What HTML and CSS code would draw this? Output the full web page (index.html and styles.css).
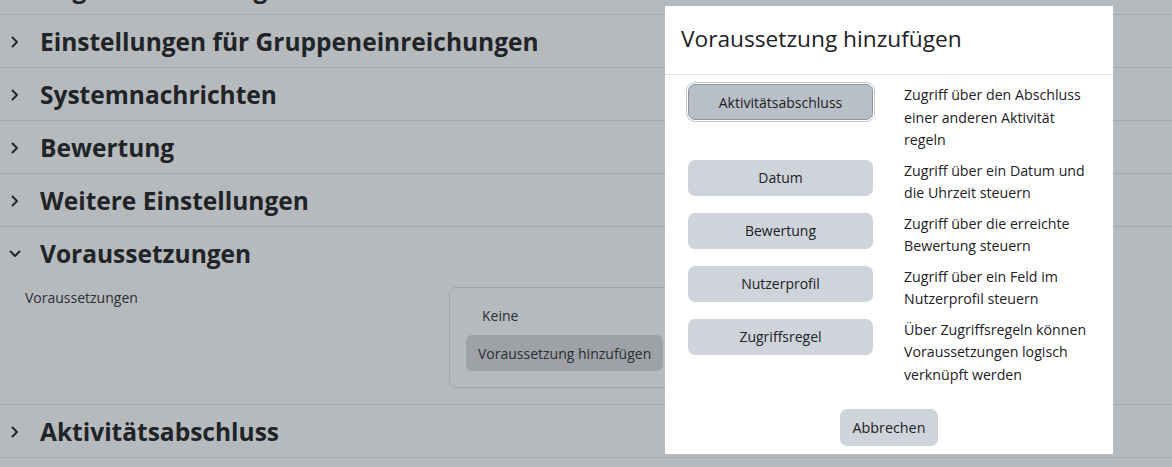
FILE: index.html
```html
<!DOCTYPE html>
<html lang="de">
<head>
<meta charset="utf-8">
<title>Voraussetzung hinzufügen</title>
<link rel="stylesheet" href="styles.css">
</head>
<body>
<div class="page">
  <div class="sections">
    <div class="section">
      <div class="sec-head"><svg class="chev" viewBox="0 0 12 12"><path d="M3.5 1.5 L8 6 L3.5 10.5"/></svg><h3>Abgabeeinstellungen</h3></div>
    </div>
    <div class="section">
      <div class="sec-head"><svg class="chev" viewBox="0 0 12 12"><path d="M3.5 1.5 L8 6 L3.5 10.5"/></svg><h3>Einstellungen für Gruppeneinreichungen</h3></div>
    </div>
    <div class="section">
      <div class="sec-head"><svg class="chev" viewBox="0 0 12 12"><path d="M3.5 1.5 L8 6 L3.5 10.5"/></svg><h3>Systemnachrichten</h3></div>
    </div>
    <div class="section">
      <div class="sec-head"><svg class="chev" viewBox="0 0 12 12"><path d="M3.5 1.5 L8 6 L3.5 10.5"/></svg><h3>Bewertung</h3></div>
    </div>
    <div class="section">
      <div class="sec-head"><svg class="chev" viewBox="0 0 12 12"><path d="M3.5 1.5 L8 6 L3.5 10.5"/></svg><h3>Weitere Einstellungen</h3></div>
    </div>
    <div class="section">
      <div class="sec-head"><svg class="chev" viewBox="0 0 12 12"><path d="M1.5 3.5 L6 8 L10.5 3.5"/></svg><h3>Voraussetzungen</h3></div>
      <div class="sec-body">
        <div class="field-label">Voraussetzungen</div>
        <div class="avail-box">
          <div class="none">Keine</div>
          <button class="btn-page" type="button">Voraussetzung hinzufügen</button>
        </div>
      </div>
    </div>
    <div class="section">
      <div class="sec-head"><svg class="chev" viewBox="0 0 12 12"><path d="M3.5 1.5 L8 6 L3.5 10.5"/></svg><h3>Aktivitätsabschluss</h3></div>
    </div>
  </div>
</div>

<div class="modal">
  <div class="modal-header"><h4>Voraussetzung hinzufügen</h4></div>
  <div class="modal-body">
    <button class="btn focus" type="button">Aktivitätsabschluss</button>
    <div class="desc">Zugriff über den Abschluss<br>einer anderen Aktivität<br>regeln</div>
    <button class="btn" type="button">Datum</button>
    <div class="desc">Zugriff über ein Datum und<br>die Uhrzeit steuern</div>
    <button class="btn" type="button">Bewertung</button>
    <div class="desc">Zugriff über die erreichte<br>Bewertung steuern</div>
    <button class="btn" type="button">Nutzerprofil</button>
    <div class="desc">Zugriff über ein Feld im<br>Nutzerprofil steuern</div>
    <button class="btn" type="button">Zugriffsregel</button>
    <div class="desc">Über Zugriffsregeln können<br>Voraussetzungen logisch<br>verknüpft werden</div>
  </div>
  <div class="modal-footer">
    <button class="btn cancel" type="button">Abbrechen</button>
  </div>
</div>
</body>
</html>
```

FILE: styles.css
```css
* { box-sizing: border-box; }
html, body {
  margin: 0;
  padding: 0;
  width: 1172px;
  height: 467px;
  overflow: hidden;
  background: #b7babd;
  font-family: "Open Sans", "Noto Sans", sans-serif;
  color: #1f2225;
}
.page {
  width: 1172px;
}
.sections {
  margin-top: -38px;
}
.section {
  border-bottom: 1px solid #a5a8ab;
}
.sec-head {
  height: 52px;
  display: flex;
  align-items: center;
  padding-top: 2px;
}
.chev {
  width: 12px;
  height: 12px;
  margin-left: 9px;
  margin-right: 19px;
  fill: none;
  stroke: #25282b;
  stroke-width: 2;
  stroke-linecap: round;
  stroke-linejoin: round;
}
.sec-head h3 {
  margin: 0;
  font-size: 24.5px;
  font-weight: 700;
  color: #212427;
  line-height: 30px;
}
.sec-body {
  display: flex;
  padding: 8px 0 16px 25px;
}
.field-label {
  width: 424px;
  font-size: 14px;
  line-height: 22px;
  color: #2b2e31;
}
.avail-box {
  width: 420px;
  border: 1px solid #a3a6a9;
  border-radius: 7px;
  padding: 17px 16px 16px 16px;
}
.none {
  margin-left: 16px;
  font-size: 14px;
  line-height: 22px;
  color: #2b2e31;
}
.btn-page {
  margin-top: 8px;
  height: 36px;
  padding: 0 12px;
  border: none;
  border-radius: 6px;
  background: #9ea2a7;
  color: #2b2e31;
  font-family: inherit;
  font-size: 14px;
}

.modal {
  position: absolute;
  left: 665px;
  top: 6px;
  width: 448px;
  height: 448px;
  background: #ffffff;
  display: flex;
  flex-direction: column;
}
.modal-header {
  height: 69px;
  border-bottom: 1px solid #dee2e6;
  display: flex;
  align-items: center;
  padding: 0 16px 2px 16px;
}
.modal-header h4 {
  margin: 0;
  font-size: 22.7px;
  font-weight: 400;
  color: #1d2125;
  line-height: 28px;
}
.modal-body {
  display: grid;
  grid-template-columns: 185px 1fr;
  column-gap: 31px;
  row-gap: 8px;
  padding: 9px 16px 0 23px;
  align-items: start;
}
.btn {
  height: 36px;
  border: none;
  border-radius: 7px;
  background: #ced4da;
  color: #1d2125;
  font-family: inherit;
  font-size: 14px;
  padding: 0 12px;
}
.btn.focus {
  background: #b9bfc6;
  border: 1px solid #8f959b;
  box-shadow: 0 0 0 1px #ffffff, 0 0 0 2px #c3c7cc;
}
.desc {
  font-size: 14.2px;
  line-height: 22.5px;
  color: #1d2125;
  white-space: nowrap;
}
.modal-footer {
  display: flex;
  justify-content: center;
  padding: 23px 0 8px 0;
}
.btn.cancel {
  width: 98px;
  height: 37px;
  font-size: 14.3px;
}
```
